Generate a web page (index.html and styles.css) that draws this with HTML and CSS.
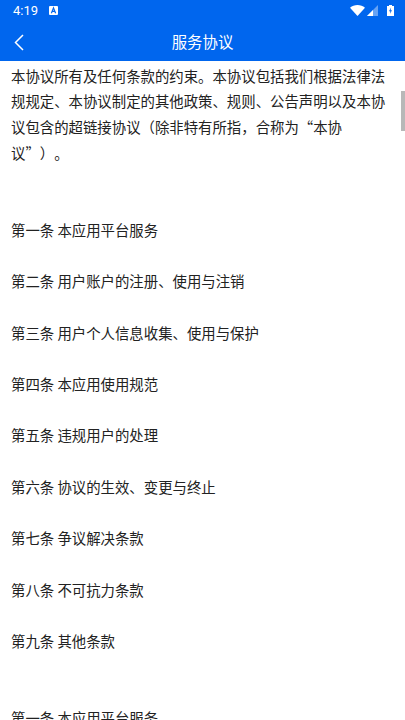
FILE: index.html
```html
<!DOCTYPE html>
<html lang="zh-CN">
<head>
<meta charset="utf-8">
<title>服务协议</title>
<link rel="stylesheet" href="styles.css">
</head>
<body>
<div class="app">
  <header class="top">
    <div class="status">
      <div class="status-left">
        <span class="time">4:19</span>
        <svg class="a-icon" viewBox="0 0 9 9"><rect width="9" height="9" rx="1" fill="#fff"/><path d="M2.4 7.2 4.5 1.8 6.6 7.2M3.2 5.3H5.8" fill="none" stroke="#0066ee" stroke-width="1.2"/></svg>
      </div>
      <div class="status-right">
        <svg class="wifi" viewBox="0 0 15 11"><path d="M0 2.8C4-.9 11-.9 15 2.8L7.5 11Z" fill="#fff"/></svg>
        <svg class="signal" viewBox="0 0 11 11"><path d="M11 0V11H0Z" fill="#fff" fill-opacity=".4"/><path d="M6 5V11H0Z" fill="#fff"/></svg>
        <svg class="battery" viewBox="0 0 7 11"><path d="M2 0H5V1H7V11H0V1H2Z" fill="#fff"/><path d="M4 2.5 2 6.2H3.3L3 8.8 5 5.2H3.7Z" fill="#0066ee"/></svg>
      </div>
    </div>
    <div class="nav">
      <svg class="back" viewBox="0 0 10 17"><path d="M9 1 1.5 8.5 9 16" fill="none" stroke="#fff" stroke-width="1.5"/></svg>
      <h1 class="title">服务协议</h1>
    </div>
  </header>
  <main class="content">
    <p class="intro">本协议所有及任何条款的约束。本协议包括我们根据法律法规规定、本协议制定的其他政策、规则、公告声明以及本协议包含的超链接协议（除非特有所指，合称为“本协<br>议”）。</p>
    <ul class="terms">
      <li>第一条 本应用平台服务</li>
      <li>第二条 用户账户的注册、使用与注销</li>
      <li>第三条 用户个人信息收集、使用与保护</li>
      <li>第四条 本应用使用规范</li>
      <li>第五条 违规用户的处理</li>
      <li>第六条 协议的生效、变更与终止</li>
      <li>第七条 争议解决条款</li>
      <li>第八条 不可抗力条款</li>
      <li>第九条 其他条款</li>
    </ul>
    <p class="section">第一条 本应用平台服务</p>
  </main>
  <div class="scrollbar"></div>
</div>
</body>
</html>
```
FILE: styles.css
```css
* { box-sizing: border-box; }
html, body { margin: 0; padding: 0; }
body { width: 405px; height: 720px; overflow: hidden; background: #fff; font-family: "Noto Sans CJK SC", "Noto Sans", sans-serif; color: #222; }
.app { position: relative; width: 405px; height: 720px; overflow: hidden; }
.top { height: 61px; background: #0066ee; color: #fff; }
.status { height: 21px; display: flex; justify-content: space-between; align-items: center; padding: 0 11px 0 13px; }
.status-left, .status-right { display: flex; align-items: center; }
.time { font-family: Roboto, sans-serif; font-size: 13px; font-weight: 400; width: 36px; }
.a-icon { width: 9px; height: 9px; }
.status-right { gap: 2px; }
.wifi { width: 15px; height: 11px; }
.signal { width: 11px; height: 11px; margin-right: 7px; }
.battery { width: 7px; height: 11px; }
.nav { position: relative; height: 40px; display: flex; align-items: center; justify-content: center; }
.back { position: absolute; left: 14px; top: 13px; width: 10px; height: 17px; }
.title { margin: 0; font-size: 15.4px; font-weight: 400; line-height: 40px; }
.content { padding: 1.6px 14px 0 11px; font-size: 14.4px; line-height: 25.7px; text-spacing-trim: space-all; }
.intro { margin: 0 0 51.4px; width: 380px; }
.terms { list-style: none; margin: 0; padding: 0; display: flex; flex-direction: column; gap: 25.7px; }
.section { margin: 51.4px 0 0; }
.scrollbar { position: absolute; right: 0; top: 91px; width: 4px; height: 40px; background: #b8b8b8; }
```
